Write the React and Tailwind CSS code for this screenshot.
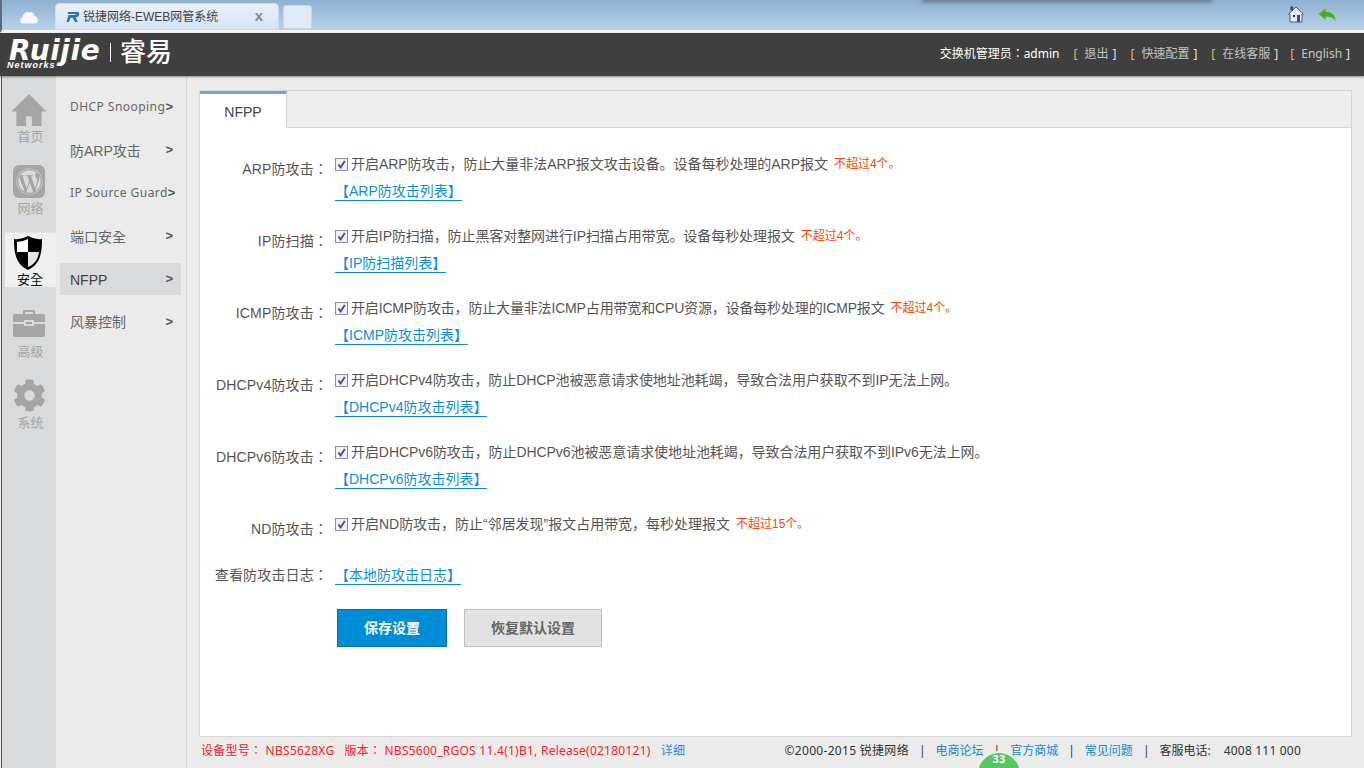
import React from "react";
import { FaWordpress, FaCog } from "react-icons/fa";

const latin = '"Noto Sans","Noto Sans CJK TC",sans-serif';
const body = '"Liberation Sans","Noto Sans CJK TC",sans-serif';
const bodySc = '"Liberation Sans","Noto Sans CJK SC",sans-serif';

function Logo() {
  return (
    <div className="flex items-center h-full pl-[7px]">
      <div className="relative w-[97px] h-[32px] text-white">
        <span className="absolute left-[2px] -top-[3px] text-[28px] leading-[30px] font-bold italic tracking-[0.6px]" style={{ fontFamily: '"DejaVu Sans",sans-serif' }}>Ruijie</span>
        <span className="absolute left-0 top-[21px] text-[9px] leading-[10px] font-bold italic tracking-[1px]" style={{ fontFamily: '"Liberation Sans",sans-serif' }}>Networks</span>
      </div>
      <div className="w-px h-[19px] bg-white ml-[6px] mr-[9px] -mt-[5px]" />
      <span className="text-white text-[26px] leading-[30px] font-medium -mt-[9px]" style={{ fontFamily: '"Noto Sans CJK SC",sans-serif' }}>睿易</span>
    </div>
  );
}

function Nav({ label, active, children }) {
  return (
    <div className={`h-[55px] flex flex-col items-center justify-end ${active ? "bg-[#f0f0f0] ml-[3px] pr-[1px] border-t border-t-[#e4e4e4] text-[#111]" : "text-[#a5a5a5]"}`}>
      <div className={`h-[34px] mb-[3px] flex items-center justify-center ${active ? "mr-[4px]" : ""}`}>{children}</div>
      <span className={`text-[13px] leading-[14px] ${active ? "" : "ml-[3px]"}`}>{label}</span>
    </div>
  );
}

function Sub({ label, active, small, shift = 0 }) {
  return (
    <div className={`h-[32px] mb-[11px] mr-[5px] pl-[10px] pr-[8px] flex items-center justify-between ${active ? "bg-[#d8dadb] text-[#444]" : "text-[#666]"}`}>
      {small ? (
        <span className="text-[12px] tracking-[0.45px] whitespace-nowrap" style={{ fontFamily: latin }}>{label}</span>
      ) : (
        <span className={`text-[14px] whitespace-nowrap ${shift ? "translate-y-[1px]" : ""}`} style={{ fontFamily: body }}>{label}</span>
      )}
      <span className="text-[13px] font-bold text-[#555]" style={{ fontFamily: body }}>&gt;</span>
    </div>
  );
}

function Check() {
  return (
    <span className="w-[13px] h-[13px] border border-[#8e8f8f] bg-[#eef0f6] flex items-center justify-center shrink-0">
      <svg width="9" height="9" viewBox="0 0 9 9"><path d="M1.5 4.5 L3.6 7.5 L7.8 1" fill="none" stroke="#3b4d9a" strokeWidth="1.8" /></svg>
    </span>
  );
}

function Row({ label, text, warn, link, track = "tracking-[-0.08px]" }) {
  return (
    <div className="flex h-[72px]">
      <div className="w-[128px] text-right text-[14px] leading-[20px] pt-[5px] text-[#555] tracking-[0.15px] whitespace-pre shrink-0">{label}</div>
      <div className="ml-[7px]">
        <div className="flex items-center h-[20px] text-[14px] text-[#555] whitespace-nowrap" style={{ fontFamily: bodySc }}>
          <Check />
          <span className={`ml-[3px] ${track}`}>{text}</span>
          {warn && <span className="ml-[6px] text-[12px] text-[#ff4400]">{warn}</span>}
        </div>
        {link && <a className="block w-fit mt-[8px] text-[14px] leading-[18px] text-[#0a8fd8] border-b border-[#0a8fd8] whitespace-nowrap">{link}</a>}
      </div>
    </div>
  );
}

export default function App() {
  return (
    <div className="w-[1364px] h-[768px] overflow-hidden flex flex-col bg-[#ebebeb] relative" style={{ fontFamily: body }}>
      <div className="h-[33px] shrink-0 flex bg-gradient-to-b from-[#8fb0d0] to-[#b8d2ea] border-l-2 border-l-[#5a6a80] border-b-[3px] border-b-[#f4f4f4] relative">
        <div className="w-[53px] flex items-center justify-center pt-[3px]">
          <svg width="20" height="14" viewBox="0 0 20 14"><path d="M4 13.5 C0.5 13.5 0 8.5 3.5 7.5 C4 3.5 8 0.5 11 2.5 C13 1.5 15.5 3.5 15.5 6 C19.5 6.5 20.5 13.5 16 13.5 Z" fill="#f5f7fa" /></svg>
        </div>
        <div className="w-[224px] h-[27px] mt-[3px] rounded-t-[4px] bg-gradient-to-b from-[#e9f1fa] to-[#d4e4f4] border border-[#cfdbe8] flex items-center pl-[8px] pr-[14px]">
          <svg width="16" height="12" viewBox="0 0 16 12"><path d="M4 1 H14 Q15.5 1 15 4 Q14.5 6 11.5 6.5 L14 11 H11 L8.8 6.8 H6.5 L5 11 H2.5 L4.5 4 H10 Q12 4 12 3 H3.5 Z" fill="#2277bb" /></svg>
          <span className="ml-[3px] text-[12px] text-[#444] whitespace-nowrap">锐捷网络-EWEB网管系统</span>
          <span className="ml-auto mr-[1px] text-[15px] font-bold text-[#888]">x</span>
        </div>
        <div className="w-[29px] h-[24px] mt-[5px] ml-[4px] rounded-t-[3px] bg-[#dfeaf6] border border-[#c5d5e5]" />
        <div className="absolute left-[922px] top-0 w-[286px] h-0 shadow-[0_0_4px_2px_rgba(70,70,80,0.65)]" />
        <div className="ml-auto flex items-center gap-[14px] pr-[28px] pb-[1px]">
          <svg width="16" height="17" viewBox="0 0 16 17"><path d="M8 1 L15.5 8 H14 V16 H2 V8 H0.5 Z" fill="#e8edf3" stroke="#555e73" strokeWidth="1" /><rect x="2.5" y="0.5" width="2.5" height="4" fill="#2a3fc0" /><rect x="5" y="9" width="2" height="2" fill="#335" /><rect x="9" y="9" width="3" height="7" fill="#2a4f90" /></svg>
          <svg width="18" height="14" viewBox="0 0 19 15"><path d="M0.5 6.5 L8 0.5 V4 C14 4 18.5 7 18.5 14 C16.5 10.5 13 9 8 9 V12.5 Z" fill="#4bae1f" /></svg>
        </div>
      </div>

      <div className="h-[43px] shrink-0 bg-[#3f3f3f] shadow-[0_1px_2px_rgba(0,0,0,0.4)] flex items-center justify-between pr-[14px] z-10">
        <Logo />
        <div className="flex items-center text-[12px] whitespace-nowrap pb-[2px]" style={{ fontFamily: latin }}>
          <span className="text-white">交换机管理员：admin</span>
          {["退出", "快速配置", "在线客服"].map((t) => (
            <span key={t} className="ml-[14px] flex items-center">
              <span className="text-[#e8b840]">[</span>
              <span className="text-[#c4c4c4] ml-[7px]">{t}</span>
              <span className="text-[#e0e0e0] ml-[4px]">]</span>
            </span>
          ))}
          <span className="ml-[12px] flex items-center">
            <span className="text-[#e8b840]">[</span>
            <span className="text-[#c4c4c4] ml-[7px]">English</span>
            <span className="text-[#e0e0e0] ml-[4px]">]</span>
          </span>
        </div>
      </div>

      <div className="flex-1 flex min-h-0">
        <div className="w-[55px] ml-[1px] shrink-0 bg-[#d8dadb] pt-[13px] flex flex-col gap-[16.5px] border-l border-[#4a5568]">
          <Nav label="首页">
            <svg width="36" height="32" viewBox="0 0 36 33"><path d="M18 0 L36 18 H31 V33 H21 V23 H15 V33 H5 V18 H0 Z" fill="#a5a5a5" /></svg>
          </Nav>
          <Nav label="网络">
            <span className="w-[32px] h-[33px] rounded-[6px] bg-[#a5a5a5] flex items-center justify-center">
              <FaWordpress size={27} className="text-[#d8dadb]" />
            </span>
          </Nav>
          <Nav label="安全" active>
            <svg width="28" height="34" viewBox="0 0 28 34"><path d="M14 0 Q21 4 28 3 C28 18 26 28 14 34 C2 28 0 18 0 3 Q7 4 14 0 Z" fill="#000" /><path d="M14 3 Q8 6 3 6 L3 16 H14 Z" fill="#fff" /><path d="M14 16 H25 C24 23 21 28 14 31 Z" fill="#e4e4e4" /></svg>
          </Nav>
          <Nav label="高级">
            <svg className="-translate-y-[1px]" width="32" height="27" viewBox="0 0 32 27"><path d="M10 4 V1 Q10 0 11 0 H21 Q22 0 22 1 V4 H20 V2 H12 V4 Z M2 4 H30 Q32 4 32 6 V12 H21 V10 H11 V12 H0 V6 Q0 4 2 4 Z M0 14 H11 V16 H21 V14 H32 V25 Q32 27 30 27 H2 Q0 27 0 25 Z M13 12 H19 V14 H13 Z" fill="#a5a5a5" /></svg>
          </Nav>
          <Nav label="系统">
            <FaCog size={33} className="-translate-y-[1px]" />
          </Nav>
        </div>

        <div className="w-[131px] shrink-0 border-r border-[#d8d8d8] pl-[4px] pt-[15px]">
          <Sub label="DHCP Snooping" small />
          <Sub label="防ARP攻击" shift />
          <Sub label="IP Source Guard" small />
          <Sub label="端口安全" shift />
          <Sub label="NFPP" active shift />
          <Sub label="风暴控制" />
        </div>

        <div className="flex-1 flex flex-col min-w-0 pl-[12px] pr-[12px] pt-[14px]">
          <div className="h-[647px] bg-white border border-[#d5d5d5] shrink-0">
            <div className="h-[37px] bg-[#eeeeee] border-b border-[#d5d5d5] flex">
              <div className="w-[87px] h-[37px] bg-white border-t-[3px] border-t-[#6ea6e0] border-r border-r-[#d5d5d5] flex items-center justify-center pt-[3px] text-[14px] text-[#444]">NFPP</div>
            </div>
            <div className="pt-[26px]">
              <Row track="tracking-[-0.04px]" label="ARP防攻击：" text="开启ARP防攻击，防止大量非法ARP报文攻击设备。设备每秒处理的ARP报文" warn="不超过4个。" link="【ARP防攻击列表】" />
              <Row track="tracking-[-0.08px]" label="IP防扫描：" text="开启IP防扫描，防止黑客对整网进行IP扫描占用带宽。设备每秒处理报文" warn="不超过4个。" link="【IP防扫描列表】" />
              <Row track="tracking-[-0.16px]" label="ICMP防攻击：" text="开启ICMP防攻击，防止大量非法ICMP占用带宽和CPU资源，设备每秒处理的ICMP报文" warn="不超过4个。" link="【ICMP防攻击列表】" />
              <Row track="tracking-[-0.09px]" label="DHCPv4防攻击：" text="开启DHCPv4防攻击，防止DHCP池被恶意请求使地址池耗竭，导致合法用户获取不到IP无法上网。" link="【DHCPv4防攻击列表】" />
              <Row track="tracking-[-0.07px]" label="DHCPv6防攻击：" text="开启DHCPv6防攻击，防止DHCPv6池被恶意请求使地址池耗竭，导致合法用户获取不到IPv6无法上网。" link="【DHCPv6防攻击列表】" />
              <div className="h-[51px] overflow-hidden">
                <Row track="tracking-[-0.02px]" label="ND防攻击：" text="开启ND防攻击，防止“邻居发现”报文占用带宽，每秒处理报文" warn="不超过15个。" />
              </div>
              <div className="flex items-center h-[20px]">
                <div className="w-[128px] text-right text-[14px] text-[#555] tracking-[0.15px] whitespace-pre shrink-0">查看防攻击日志：</div>
                <a className="ml-[7px] block text-[14px] leading-[18px] text-[#0a8fd8] border-b border-[#0a8fd8] whitespace-nowrap">【本地防攻击日志】</a>
              </div>
              <div className="flex ml-[137px] mt-[24px] gap-[17px]">
                <div className="w-[110px] h-[38px] bg-[#008dd7] border border-[#0a6ea8] text-white text-[14px] font-bold flex items-center justify-center">保存设置</div>
                <div className="w-[138px] h-[38px] bg-[#e2e2e2] border border-[#bdbdbd] text-[#666] text-[14px] font-bold flex items-center justify-center">恢复默认设置</div>
              </div>
            </div>
          </div>
          <div className="flex-1 flex items-center text-[12px] tracking-[0.25px] whitespace-nowrap relative pb-[3px]" style={{ fontFamily: latin }}>
            <span className="text-[#ff2020] pl-[2px]">设备型号： NBS5628XG</span>
            <span className="text-[#ff2020] ml-[10px]">版本： NBS5600_RGOS 11.4(1)B1, Release(02180121)</span>
            <span className="text-[#1e90e0] ml-[10px]">详细</span>
            <div className="ml-auto flex items-center pr-[51px] text-[#333] tracking-normal">
              <span className="tracking-[0.3px]">©2000-2015 锐捷网络</span>
              <span className="mx-[10px]">|</span>
              <span className="text-[#1488d8]">电商论坛</span>
              <span className="mx-[10px]">|</span>
              <span className="text-[#1488d8]">官方商城</span>
              <span className="mx-[10px]">|</span>
              <span className="text-[#1488d8]">常见问题</span>
              <span className="mx-[10px]">|</span>
              <span>客服电话:</span>
              <span className="ml-[13px] tracking-[0.2px]">4008 111 000</span>
            </div>
            <div className="absolute left-[777px] top-[14px] w-[46px] h-[46px] rounded-full bg-[#55c861] border-2 border-[#eeeeee] flex justify-center text-white text-[11px] font-bold leading-[12px]">33</div>
          </div>
        </div>
      </div>
    </div>
  );
}
